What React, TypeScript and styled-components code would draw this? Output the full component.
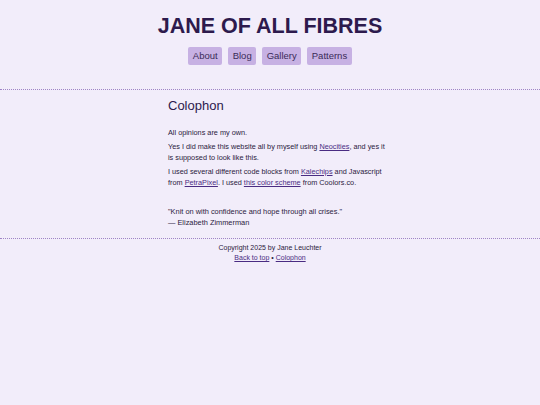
import * as React from 'react';
import styled, { createGlobalStyle } from 'styled-components';

const GlobalStyle = createGlobalStyle`
  html, body {
    margin: 0;
    padding: 0;
    background: #f2edfa;
    font-family: "Liberation Sans", Arial, sans-serif;
    color: #2b2140;
  }
`;

const Header = styled.header`
  display: flex;
  flex-direction: column;
  align-items: center;
  padding: 14px 0 24px;
  border-bottom: 1px dotted #9f84c6;
`;

const Title = styled.h1`
  margin: 0;
  font-size: 21.5px;
  line-height: 25px;
  font-weight: bold;
  color: #2d1a4d;
`;

const Nav = styled.nav`
  display: flex;
  gap: 6px;
  margin-top: 8px;
`;

const NavButton = styled.a`
  display: block;
  background: #c7b1e3;
  color: #3a2a58;
  font-size: 9.5px;
  line-height: 18px;
  padding: 0 4.5px;
  border-radius: 2px;
  text-decoration: none;
`;

const Main = styled.main`
  border-bottom: 1px dotted #9f84c6;
  padding: 8px 0 10px;
`;

const Column = styled.div`
  width: 220px;
  margin: 0 auto;
  padding-left: 16px;
`;

const Heading = styled.h2`
  margin: 0 0 14px;
  font-size: 13px;
  line-height: 15px;
  font-weight: normal;
  color: #2d1a4d;
`;

const Para = styled.p`
  margin: 0 0 3px;
  font-size: 7.3px;
  line-height: 11px;
`;

const Quote = styled.p`
  margin: 18px 0 0;
  font-size: 7.4px;
  line-height: 11px;
`;

const Link = styled.a`
  color: #4a2c82;
  text-decoration: underline;
`;

const Footer = styled.footer`
  text-align: center;
  padding-top: 4px;
  font-size: 7px;
  line-height: 10px;
`;

export default function App() {
  return (
    <>
      <GlobalStyle />
      <Header>
        <Title>JANE OF ALL FIBRES</Title>
        <Nav>
          <NavButton href="#">About</NavButton>
          <NavButton href="#">Blog</NavButton>
          <NavButton href="#">Gallery</NavButton>
          <NavButton href="#">Patterns</NavButton>
        </Nav>
      </Header>
      <Main>
        <Column>
          <Heading>Colophon</Heading>
          <Para>All opinions are my own.</Para>
          <Para>
            Yes I did make this website all by myself using <Link href="#">Neocities</Link>, and yes it
            is supposed to look like this.
          </Para>
          <Para>
            I used several different code blocks from <Link href="#">Kalechips</Link> and Javascript
            from <Link href="#">PetraPixel</Link>. I used <Link href="#">this color scheme</Link> from
            Coolors.co.
          </Para>
          <Quote>
            "Knit on with confidence and hope through all crises."
            <br />— Elizabeth Zimmerman
          </Quote>
        </Column>
      </Main>
      <Footer>
        Copyright 2025 by Jane Leuchter
        <br />
        <Link href="#">Back to top</Link> • <Link href="#">Colophon</Link>
      </Footer>
    </>
  );
}
